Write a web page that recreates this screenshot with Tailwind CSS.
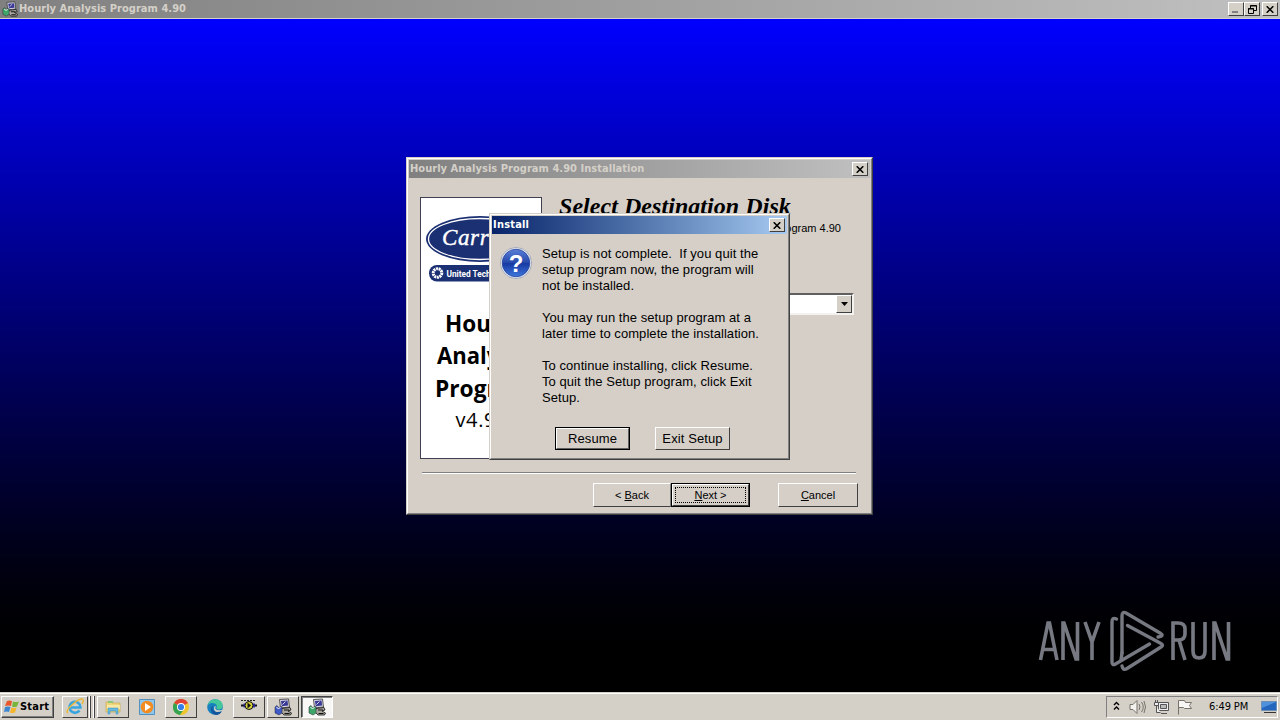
<!DOCTYPE html>
<html lang="en">
<head>
    <meta charset="UTF-8">
    <meta name="viewport" content="width=device-width, initial-scale=1.0">
    <title>Hourly Analysis Program 4.90</title>
    <script src="https://cdn.jsdelivr.net/npm/@tailwindcss/browser@4"></script>
</head>
<body class="relative w-[1280px] h-[720px] overflow-hidden flex flex-col bg-black font-['Liberation_Sans',sans-serif] text-black">
    <!-- shared icons -->
    <svg class="hidden">
        <symbol id="close" viewBox="0 0 8 7"><path d="M.7.200L7.300 6.800M7.300.200L.700 6.800" stroke="#000" stroke-width="1.500"/></symbol>
        <symbol id="setup" viewBox="0 0 18 18">
            <path d="M5.500 1.500l9-.5 1 8-9 1z" fill="#d8d6e4" stroke="#333" stroke-width=".8"/>
            <path d="M7 3l6.500-.4.6 5-6.300.6z" fill="#3a3a96"/>
            <path d="M8.500 6.500l3-3" stroke="#d8d6e4"/>
            <path d="M8 10.500l8-1 1 2.500-3 1 3.500 2-1 2H10l-3-3z" fill="#aaa69e" stroke="#111" stroke-width=".8"/>
            <path d="M10 12h5M10.500 15.500h5" stroke="#111" stroke-width="1.200"/>
            <path d="M1 9l2-1.500 1.500 2L8 8.500V15l-3 2-4-2z" fill="currentColor" stroke="#223" stroke-width=".5"/>
            <path d="M2.500 9.500l2 1 2-1" stroke="#fff" fill="none"/>
        </symbol>
    </svg>

    <!-- main title bar -->
    <header class="h-[19px] shrink-0 flex items-center border-b border-[#d4d0c8] bg-linear-to-r from-[#808080] to-[#c0c0c0] pl-[2px] pr-[2px]">
        <svg class="w-4 h-4 text-[#3fa66a]"><use href="#setup"/></svg>
        <span class="ml-[1px] mt-[1px] font-['DejaVu_Sans_Condensed','DejaVu_Sans',sans-serif] font-bold text-[11px] tracking-[.04px] text-[#d4d0c8] whitespace-nowrap">Hourly Analysis Program 4.90</span>
        <div class="ml-auto flex">
            <span class="w-4 h-[14px] bg-[#d4d0c8] border border-t-white border-l-white border-r-[#404040] border-b-[#404040] flex items-end pl-[3px] pb-[2px]"><i class="w-[6px] h-[2px] bg-[#808080]"></i></span>
            <span class="w-4 h-[14px] bg-[#d4d0c8] border border-t-white border-l-white border-r-[#404040] border-b-[#404040] flex items-center justify-center">
                <svg class="w-[9px] h-[9px]" viewBox="0 0 9 9" fill="none" stroke="#000"><path d="M2.500 3V.5h6v5H6M2 1h7M.5 3.500h5v5h-5zM0 4h6"/></svg>
            </span>
            <span class="ml-[2px] w-4 h-[14px] bg-[#d4d0c8] border border-t-white border-l-white border-r-[#404040] border-b-[#404040] flex items-center justify-center"><svg class="w-2 h-[7px]"><use href="#close"/></svg></span>
        </div>
    </header>

    <main class="flex-1 bg-linear-to-b from-[#0000ff] to-black"></main>

    <!-- wizard window -->
    <section class="absolute left-[406px] top-[157px] w-[467px] h-[358px] bg-[#d5cfc8] border border-t-[#d4d0c8] border-l-[#d4d0c8] border-r-[#404040] border-b-[#404040]">
        <div class="w-full h-full border border-t-white border-l-white border-r-[#808080] border-b-[#808080] p-[1px] flex flex-col">
            <div class="h-[18px] shrink-0 flex items-center bg-linear-to-r from-[#808080] to-[#c0c0c0] pl-[1px] pr-[2px]">
                <span class="font-['DejaVu_Sans_Condensed','DejaVu_Sans',sans-serif] font-bold text-[11px] tracking-[.04px] text-[#d4d0c8] whitespace-nowrap">Hourly Analysis Program 4.90 Installation</span>
                <span class="ml-auto w-4 h-[14px] bg-[#d4d0c8] border border-t-white border-l-white border-r-[#404040] border-b-[#404040] flex items-center justify-center"><svg class="w-2 h-[7px]"><use href="#close"/></svg></span>
            </div>
            <div class="flex pt-[19px] pl-[11px] h-[281px] shrink-0">
                <div class="w-[122px] h-[262px] bg-white border border-[#404050]">
                    <svg class="w-[120px] h-[260px] font-['Open_Sans','Noto_Sans',sans-serif]" viewBox="421 198 120 260">
                        <ellipse cx="480" cy="239" rx="54" ry="23" fill="#1b2f73"/>
                        <ellipse cx="480" cy="239" rx="51.5" ry="20.5" fill="none" stroke="#fff" stroke-width="1.3"/>
                        <text x="442" y="245" class="font-['Liberation_Serif',serif] italic text-[23px]" fill="#fff" stroke="#fff" stroke-width=".4" textLength="74">Carrier</text>
                        <rect x="429" y="265" width="104" height="16.500" rx="8" fill="#1b2f73"/>
                        <circle cx="437.500" cy="273" r="4.300" fill="none" stroke="#fff" stroke-width="3" stroke-dasharray="2 .6"/>
                        <text x="446.500" y="276.500" class="font-['Roboto',sans-serif] font-bold text-[9px]" fill="#fff" textLength="76" lengthAdjust="spacingAndGlyphs">United Technologies</text>
                        <g class="font-['Open_Sans',sans-serif] font-bold text-[23px]">
                            <text x="445" y="332" textLength="76" lengthAdjust="spacingAndGlyphs">Hourly</text>
                            <text x="437" y="364" textLength="91" lengthAdjust="spacingAndGlyphs">Analysis</text>
                            <text x="435" y="397" textLength="98" lengthAdjust="spacingAndGlyphs">Program</text>
                        </g>
                        <text x="455.500" y="427" class="text-[20px]" textLength="52">v4.90</text>
                    </svg>
                </div>
                <div class="ml-[17px] w-[295px] flex flex-col">
                    <h1 class="h-[22px] leading-[18px] whitespace-nowrap font-['Liberation_Serif',serif] font-bold italic text-[24px] tracking-[.05px]">Select Destination Disk</h1>
                    <p class="mt-[3px] pr-[13px] text-right text-[11px] leading-[13px] whitespace-nowrap">Hourly Analysis Program 4.90</p>
                    <div class="mt-[58px] h-[22px] bg-white border-2 border-t-[#606060] border-l-[#808080] border-r-[#f4f2ee] border-b-[#f4f2ee] flex justify-end">
                        <span class="w-4 h-[18px] bg-[#d4d0c8] border border-t-white border-l-white border-r-[#404040] border-b-[#404040] flex items-center justify-center"><svg class="w-[7px] h-1" viewBox="0 0 7 4"><path d="M0 0h7L3.500 4z"/></svg></span>
                    </div>
                </div>
            </div>
            <div class="mt-[13px] ml-[13px] mr-[14px] h-[2px] shrink-0 bg-[#808080] border-b border-white"></div>
            <div class="mt-[9px] pr-[12px] flex justify-end text-[11px] leading-none">
                <button class="w-[78px] h-6 flex items-center justify-center border border-t-white border-l-white border-r-[#808080] border-b-[#404040]"><span>&lt; <u>B</u>ack</span></button>
                <button class="w-[79px] h-6 border border-black"><span class="w-full h-full p-[2px] flex border border-t-white border-l-white border-r-[#404040] border-b-[#404040]"><span class="flex-1 border border-dotted border-black flex items-center justify-center"><span><u>N</u>ext &gt;</span></span></span></button>
                <button class="ml-7 w-20 h-6 flex items-center justify-center border border-t-white border-l-white border-r-[#404040] border-b-[#404040]"><span><u>C</u>ancel</span></button>
            </div>
        </div>
    </section>

    <!-- exit confirmation -->
    <section class="absolute left-[489px] top-[213px] w-[301px] h-[247px] bg-[#d5cfc8] border border-t-[#d4d0c8] border-l-[#d4d0c8] border-r-[#404040] border-b-[#404040]">
        <div class="w-full h-full border border-t-white border-l-white border-r-[#808080] border-b-[#808080] p-[1px] flex flex-col">
            <div class="h-[18px] shrink-0 flex items-center bg-linear-to-r from-[#0a246a] to-[#a6caf0] pl-[1px] pr-[2px]">
                <span class="font-['DejaVu_Sans_Condensed','DejaVu_Sans',sans-serif] font-bold text-[11px] tracking-[.2px] text-white">Install</span>
                <span class="ml-auto w-4 h-[14px] bg-[#d4d0c8] border border-t-white border-l-white border-r-[#404040] border-b-[#404040] flex items-center justify-center"><svg class="w-2 h-[7px]"><use href="#close"/></svg></span>
            </div>
            <div class="flex pt-[13px] pl-2 h-[193px] shrink-0">
                <svg class="w-8 h-8" viewBox="0 0 32 32">
                    <defs><linearGradient id="q" x2="0" y2="1"><stop stop-color="#5a80d8"/><stop offset=".48" stop-color="#2849ac"/><stop offset=".52" stop-color="#1739a3"/><stop offset="1" stop-color="#3f78dc"/></linearGradient></defs>
                    <circle cx="16" cy="16" r="15.500" fill="#eef1f8" stroke="#8790a8" stroke-width=".7"/>
                    <circle cx="16" cy="16" r="13.800" fill="url(#q)" stroke="#23409a" stroke-width=".8"/>
                    <text x="16" y="24.500" text-anchor="middle" class="font-bold text-[24px]" fill="#fff">?</text>
                </svg>
                <div class="ml-[10px] -mt-[1px] text-[13px] leading-4 tracking-[.06px] whitespace-pre">Setup is not complete.  If you quit the
setup program now, the program will
not be installed.

You may run the setup program at a
later time to complete the installation.

To continue installing, click Resume.
To quit the Setup program, click Exit
Setup.</div>
            </div>
            <div class="flex pl-[63px] text-[13px] leading-none tracking-[.1px]">
                <button class="w-[75px] h-[23px] border border-black"><span class="w-full h-full flex items-center justify-center border border-t-white border-l-white border-r-[#606060] border-b-[#606060]">Resume</span></button>
                <button class="ml-[25px] w-[75px] h-[23px] flex items-center justify-center whitespace-nowrap border border-t-white border-l-white border-r-[#404040] border-b-[#404040]">Exit Setup</button>
            </div>
        </div>
    </section>

    <!-- watermark -->
    <svg class="absolute left-[1030px] top-[605px] w-[210px] h-[72px]" viewBox="1030 605 210 72" fill="none" stroke="#777982" stroke-width="3.600">
        <path d="M1040.500 660l7.500-37h1.500l7.500 37M1043 649.500h11.500"/>
        <path d="M1063 660v-37h1l12 36h1.500v-37"/>
        <path d="M1085 622l7 20 7-20M1092 641v19"/>
        <g stroke-linecap="round" stroke-linejoin="round" stroke-width="3.400">
            <path d="M1116.500 619q-4.500-2-4.500 3v40q0 4 3.500 2l34-20"/>
            <path d="M1122 653v-37q0-5 4-3l34 20q5 3-2 4"/>
            <path d="M1127.500 625.500l33.500 18q3 1.500 0 3.500l-34 21.500q-4 2.500-5-2.500"/>
            <path d="M1122 653l-1 7"/>
        </g>
        <path d="M1173 660v-37h5q7 0 7 6v5q0 6-7 6h-5M1179 640l6 20"/>
        <path d="M1193 622v29q0 7 6 7t6-7v-29"/>
        <path d="M1214 660v-37h1l12 36h1.500v-37"/>
    </svg>

    <!-- taskbar -->
    <footer class="h-7 shrink-0 bg-[#d4d0c8] border-t border-[#d4d0c8] shadow-[inset_0_1px_0_#fff] flex items-start pt-[3px]">
        <button class="ml-[1px] w-[53px] h-[22px] flex items-center pl-[2px] border border-t-white border-l-white border-r-[#404040] border-b-[#404040] shadow-[inset_-1px_-1px_0_#808080]">
            <svg class="w-4 h-4" viewBox="0 0 16 16"><path d="M3 2q2-1 5 0L7 7Q4 6 1 7z" fill="#e8572a"/><path d="M9 2.500q3 1 6 0L13 7.500q-3 1-5 0z" fill="#78b63b"/><path d="M1 8q3-1 5.500 0L5 13q-2-1-5 0z" fill="#3f86d0"/><path d="M7.500 8.500q3 1 5 0l-1.500 5q-3 1-5 0z" fill="#f4b52b"/></svg>
            <span class="font-['DejaVu_Sans_Condensed','DejaVu_Sans',sans-serif] font-bold text-[11px] tracking-[.2px]">Start</span>
        </button>
        <div class="ml-2 w-[26px] h-[22px] flex items-center justify-center border border-t-white border-l-white border-r-[#404040] border-b-[#404040]">
            <svg class="w-[18px] h-[18px]" viewBox="0 0 18 18" fill="none"><path d="M13.500 12.500A5.500 5.500 0 1 1 14.500 9.500H5" stroke="#38a5df" stroke-width="2.600"/><path d="M2 15Q-1 13 7 6t10-4q1 1-1 4" stroke="#e8b837" stroke-width="1.500"/></svg>
        </div>
        <i class="ml-[1px] w-[2px] h-[22px] bg-[#404040] border-l border-white"></i>
        <i class="ml-[2px] w-[2px] h-[22px] bg-[#404040] border-l border-white"></i>
        <div class="ml-[2px] w-8 h-[22px] flex items-center justify-center border border-t-white border-l-white border-r-[#404040] border-b-[#404040]">
            <svg class="w-4 h-4" viewBox="0 0 16 16"><path d="M1 3h5l1 1h8v9H1z" fill="#efd67c" stroke="#c9a94d" stroke-width=".7"/><path d="M3 2h5v2H3z" fill="#8bc876"/><path d="M2 6h13v4H2z" fill="#f8e8a4"/><path d="M3 9h10v6h-2v-3H5v3H3z" fill="#67b7df" stroke="#3d91bb" stroke-width=".5"/></svg>
        </div>
        <svg class="ml-[10px] mt-[3px] w-4 h-4" viewBox="0 0 16 16"><path d="M.5.500h15v15H.5z" fill="#8ec7eb" stroke="#5290c0"/><circle cx="8" cy="8" r="6.300" fill="#f28b20"/><path d="M6 4l6 4-6 4z" fill="#fff"/></svg>
        <div class="ml-[10px] w-8 h-[22px] flex items-center justify-center border border-t-white border-l-white border-r-[#404040] border-b-[#404040]">
            <svg class="w-4 h-4" viewBox="0 0 16 16"><circle cx="8" cy="8" r="8" fill="#efc52d"/><path d="M8 8L1 4a8 8 0 0 1 14 0z" fill="#df4335"/><path d="M8 8L1 4a8 8 0 0 0 6 12l4-6z" fill="#36a352"/><circle cx="8" cy="8" r="4" fill="#fff"/><circle cx="8" cy="8" r="3.100" fill="#347ee8"/></svg>
        </div>
        <svg class="ml-[10px] mt-[3px] w-4 h-4" viewBox="0 0 16 16"><circle cx="8" cy="8" r="7.800" fill="#177fbd"/><path d="M.5 7Q2 0 9 .300q7 1 6.500 7-.5 4-5 3-2-1-.500-3Q9 4 5 4 2 4 .5 7z" fill="#43c79b"/><path d="M6 7q-2 6 6 6 2 0 3-1-2 4-6 4-5-1-5-6 0-2 2-3z" fill="#14569b"/><path d="M9 7q-3 5 6 4v1q-8 3-8-3 0-2 2-2z" fill="#d4d0c8"/></svg>
        <div class="ml-[10px] w-8 h-[22px] flex items-center justify-center border border-t-white border-l-white border-r-[#404040] border-b-[#404040]">
            <svg class="w-[18px] h-4" viewBox="0 0 18 16"><path d="M1 1.500h15" stroke="#222" stroke-dasharray="2 1"/><path d="M1 6.500h16" stroke="#111" stroke-width="2"/><path d="M3.500 4.500h2v4h-2zM13 4.500h2v4h-2z" fill="#2b2ba0"/><circle cx="9" cy="6.500" r="4" fill="#d8d33c" stroke="#111"/><path d="M7.500 3.500v6l3.500-3z" fill="#111"/></svg>
        </div>
        <div class="ml-[2px] w-8 h-[22px] flex items-center justify-center border border-t-white border-l-white border-r-[#404040] border-b-[#404040]"><svg class="w-[18px] h-[18px] text-[#3f59c7]"><use href="#setup"/></svg></div>
        <div class="ml-[2px] w-8 h-[22px] flex items-center justify-center bg-[#f8f7f5] border border-t-[#404040] border-l-[#404040] border-r-white border-b-white shadow-[inset_1px_1px_0_#808080]"><svg class="w-[18px] h-[18px] text-[#3fa66a]"><use href="#setup"/></svg></div>

        <!-- tray -->
        <div class="ml-auto mr-[2px] w-[172px] h-[22px] flex items-center pl-[6px] border border-t-[#808080] border-l-[#808080] border-r-white border-b-white">
            <svg class="w-[7px] h-[10px] mb-[2px]" viewBox="0 0 7 10" fill="none" stroke="#000" stroke-width="1.400"><path d="M1 4l2.500-2.500L6 4M1 8.500L3.500 6 6 8.500"/></svg>
            <svg class="ml-[9px] w-[18px] h-4" viewBox="0 0 18 16" fill="#f3f2ef" stroke="#77736c"><path d="M1 5.500h3l4-4v13l-4-4H1z"/><path d="M10 5q2 3 0 6M12.500 3q3.500 5 0 10M15 2q3 6 0 12" fill="none"/></svg>
            <svg class="ml-[6px] w-4 h-4" viewBox="0 0 16 16" fill="#eee" stroke="#555"><path d="M5.500 3.500h10v8h-10z"/><path d="M7.500 5.500h6v4h-6z" fill="#bbb"/><path d="M1.500 3.500h4v3h-4zM2.500 1v2M4.500 1v2M3.500 7v6.500h4M8 14.500h6"/></svg>
            <svg class="ml-2 w-4 h-4" viewBox="0 0 16 16" fill="#f7f6f4" stroke="#77736c"><path d="M1.500 15.500V1.500h6l1 2h6l-2 3 2 3h-7l-1-1h-5"/></svg>
            <span class="ml-[16px] w-[41px] mt-[1px] whitespace-nowrap font-['DejaVu_Sans_Condensed','DejaVu_Sans',sans-serif] text-[11px] tracking-[-.1px]">6:49 PM</span>
            <svg class="ml-[11px] w-4 h-4" viewBox="0 0 16 16"><path d="M.5 2.500h15v9H.5z" fill="#2465bd" stroke="#6d8fb6"/><path d="M1 3h14L1 9z" fill="#4f91dc"/><path d="M3 13.500h12" stroke="#333"/></svg>
        </div>
    </footer>
</body>
</html>
